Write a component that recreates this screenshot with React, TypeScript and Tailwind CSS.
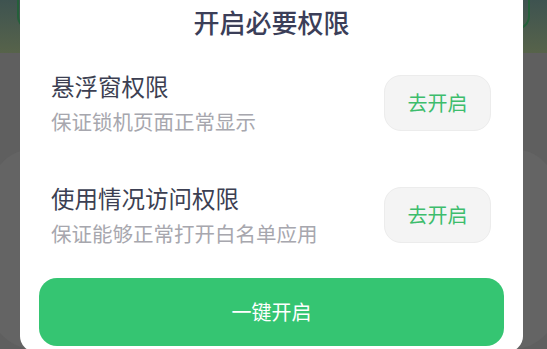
const rows = [
  { title: '悬浮窗权限', desc: '保证锁机页面正常显示' },
  { title: '使用情况访问权限', desc: '保证能够正常打开白名单应用' },
]

export default function App() {
  return (
    <div
      className="relative w-[547px] h-[349px] overflow-hidden bg-[#5d5d5d]"
      style={{ fontFamily: '"Noto Sans CJK SC", "Noto Sans", sans-serif' }}
    >
      {/* page behind the dimmed overlay */}
      <div className="flex flex-col h-full">
        <div className="relative h-[139px] bg-gradient-to-b from-[#3e5350] to-[#57634a]">
          <div className="absolute left-[17px] right-[17px] top-[-20px] h-[50px] rounded-b-[14px] border-x-2 border-b-2 border-[#24603a]" />
        </div>
        <div className="flex-1 bg-[#5f5f5f] pt-[96px]">
          <div className="mx-[-10px] h-[200px] rounded-[44px] bg-[#646464]" />
        </div>
      </div>

      {/* dialog */}
      <div className="absolute left-[20px] right-[24px] top-[-20px] bottom-[-3px] rounded-[16px] bg-white flex flex-col pt-[25px] pb-[5px]">
        <h2 className="text-center text-[26px] leading-[34px] font-medium text-[#3b3e58]">开启必要权限</h2>

        <div className="flex flex-col gap-[48px] mt-[32px] pl-[31px] pr-[32px]">
          {rows.map((r) => (
            <div key={r.title} className="flex items-center justify-between">
              <div className="flex flex-col">
                <span className="text-[23.5px] leading-[30px] text-[#3c3f52]">{r.title}</span>
                <span className="mt-[6px] text-[20.5px] leading-[28px] text-[#a7a7ae]">{r.desc}</span>
              </div>
              <button className="w-[107px] h-[56px] rounded-[17px] bg-[#f4f4f4] border border-[#ececec] text-[20px] text-[#3dbd6c]">
                去开启
              </button>
            </div>
          ))}
        </div>

        <button className="mt-[31px] mx-[19px] h-[68px] rounded-[18px] bg-[#35c572] text-white text-[20px]">
          一键开启
        </button>
      </div>
    </div>
  )
}
